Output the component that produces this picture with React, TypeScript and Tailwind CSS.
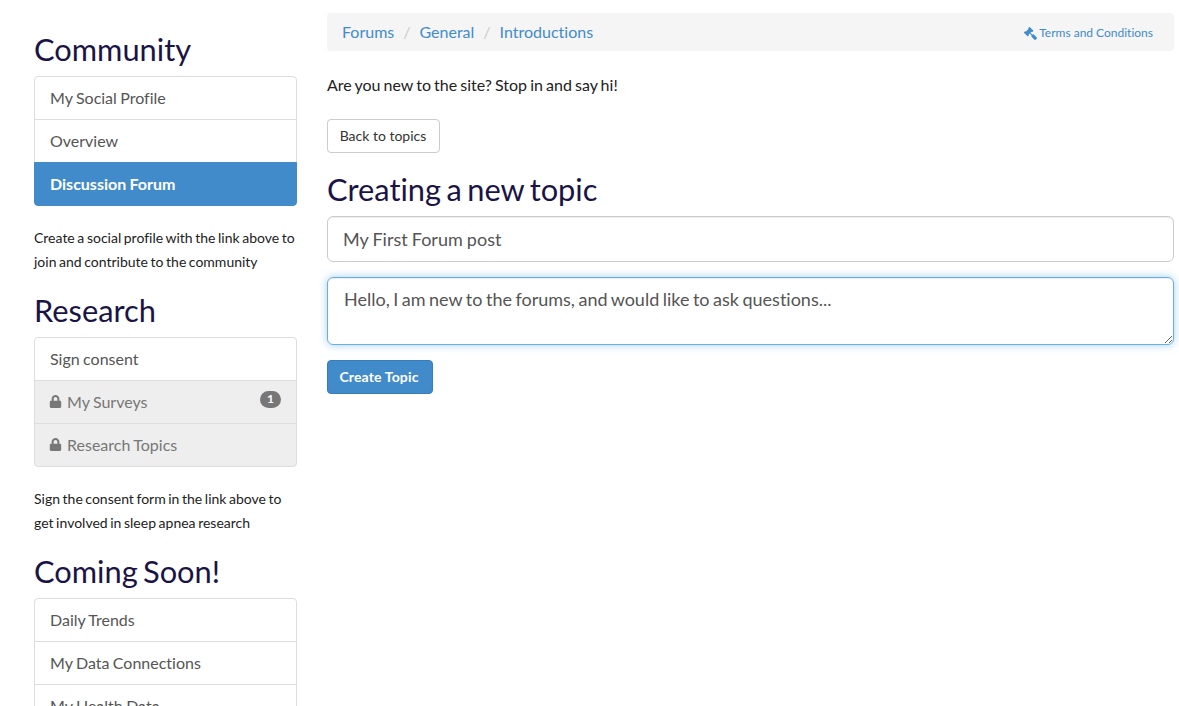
import { FaGavel, FaLock } from "react-icons/fa";

const FONT = "font-['Lato','Open_Sans',sans-serif] [font-variant-ligatures:none]";

type NavItem = {
  label: string;
  active?: boolean;
  locked?: boolean;
  badge?: number;
};

const SECTIONS: { title: string; items: NavItem[]; note?: string[] }[] = [
  {
    title: "Community",
    items: [
      { label: "My Social Profile" },
      { label: "Overview" },
      { label: "Discussion Forum", active: true },
    ],
    note: [
      "Create a social profile with the link above to",
      "join and contribute to the community",
    ],
  },
  {
    title: "Research",
    items: [
      { label: "Sign consent" },
      { label: "My Surveys", locked: true, badge: 1 },
      { label: "Research Topics", locked: true },
    ],
    note: [
      "Sign the consent form in the link above to",
      "get involved in sleep apnea research",
    ],
  },
  {
    title: "Coming Soon!",
    items: [
      { label: "Daily Trends" },
      { label: "My Data Connections" },
      { label: "My Health Data" },
    ],
  },
];

function ListItem({ item }: { item: NavItem }) {
  let tone = "bg-white text-[#555555] border-[#dddddd]";
  if (item.active) tone = "bg-[#428bca] text-white font-bold border-[#428bca] z-10";
  if (item.locked) tone = "bg-[#eeeeee] text-[#777777] border-[#dddddd]";

  return (
    <div
      className={`relative -mb-px flex h-[44px] items-center justify-between border px-[15px] pb-px text-[16px] [word-spacing:-0.7px] first:rounded-t last:rounded-b ${tone}`}
    >
      <span className="flex items-center">
        {item.locked && <FaLock className="mr-[5px] -ml-px size-[13px]" />}
        {item.label}
      </span>
      {item.badge && (
        <span className="-mt-[5px] flex h-[17px] w-[21px] items-center justify-center rounded-[10px] bg-[#777777] text-[12px] font-bold text-white">
          {item.badge}
        </span>
      )}
    </div>
  );
}

function Sidebar() {
  return (
    <aside className="w-[263px] shrink-0">
      {SECTIONS.map((section) => (
        <section key={section.title} className="h-[261px] pt-[33px]">
          <h2 className="mb-[10px] text-[30.8px] leading-[33px] font-normal text-[#1a1446] [word-spacing:-2.5px]">
            {section.title}
          </h2>
          <div className="mb-[20px]">
            {section.items.map((item) => (
              <ListItem key={item.label} item={item} />
            ))}
          </div>
          {section.note && (
            <p className="mt-[21px] text-[14px] leading-[24px] text-[#222222] [word-spacing:-1px]">
              {section.note.map((line) => (
                <span key={line} className="block">
                  {line}
                </span>
              ))}
            </p>
          )}
        </section>
      ))}
    </aside>
  );
}

function Breadcrumb() {
  const crumbs = ["Forums", "General", "Introductions"];
  return (
    <div className="flex h-[38px] items-center justify-between rounded bg-[#f5f5f5] pr-[21px] pl-[15px] text-[16px] text-[#428bca]">
      <div className="flex items-center">
        {crumbs.map((crumb, i) => (
          <span key={crumb} className="flex items-center">
            {i > 0 && <span className="px-[9px] text-[#cccccc]">/</span>}
            {crumb}
          </span>
        ))}
      </div>
      <span className="mt-[2px] flex items-center text-[12px]">
        <FaGavel className="mr-[2px] size-[13px] -scale-x-100" />
        Terms and Conditions
      </span>
    </div>
  );
}

function Main() {
  return (
    <main className="mt-[13px] min-w-0 flex-1">
      <Breadcrumb />
      <p className="mt-[22px] text-[16px] leading-[23px] text-[#222222] [word-spacing:-1px]">
        Are you new to the site? Stop in and say hi!
      </p>
      <button className="mt-[23px] block h-[34px] w-[113px] rounded border border-[#cccccc] bg-white pr-px pb-[2px] text-[14px] text-[#333333]">
        Back to topics
      </button>
      <h2 className="mt-[20px] text-[30.8px] leading-[33px] font-normal text-[#1a1446] [word-spacing:-2.4px]">
        Creating a new topic
      </h2>
      <input
        readOnly
        value="My First Forum post"
        className="mt-[10px] block h-[46px] w-full rounded-md border border-[#cccccc] pr-[16px] pl-[15px] text-[18px] text-[#555555] shadow-[inset_0_1px_1px_rgba(0,0,0,0.075)] outline-none [word-spacing:-0.5px]"
      />
      <textarea
        readOnly
        value="Hello, I am new to the forums, and would like to ask questions..."
        className="mt-[15px] block h-[68px] w-full rounded-md border border-[#66afe9] px-[16px] pt-[9px] pb-[10px] text-[18px] leading-[24px] text-[#555555] shadow-[inset_0_1px_1px_rgba(0,0,0,0.075),0_0_8px_rgba(102,175,233,0.6)] outline-none [word-spacing:-1.1px]"
      />
      <button className="mt-[15px] block h-[34px] w-[106px] rounded border border-[#357ebd] bg-[#428bca] pr-[2px] pb-[2px] text-[14px] font-bold tracking-[0.15px] text-white">
        Create Topic
      </button>
    </main>
  );
}

export default function App() {
  return (
    <div className={`flex h-screen gap-[30px] overflow-hidden bg-white pr-[5px] pl-[34px] ${FONT}`}>
      <Sidebar />
      <Main />
    </div>
  );
}
